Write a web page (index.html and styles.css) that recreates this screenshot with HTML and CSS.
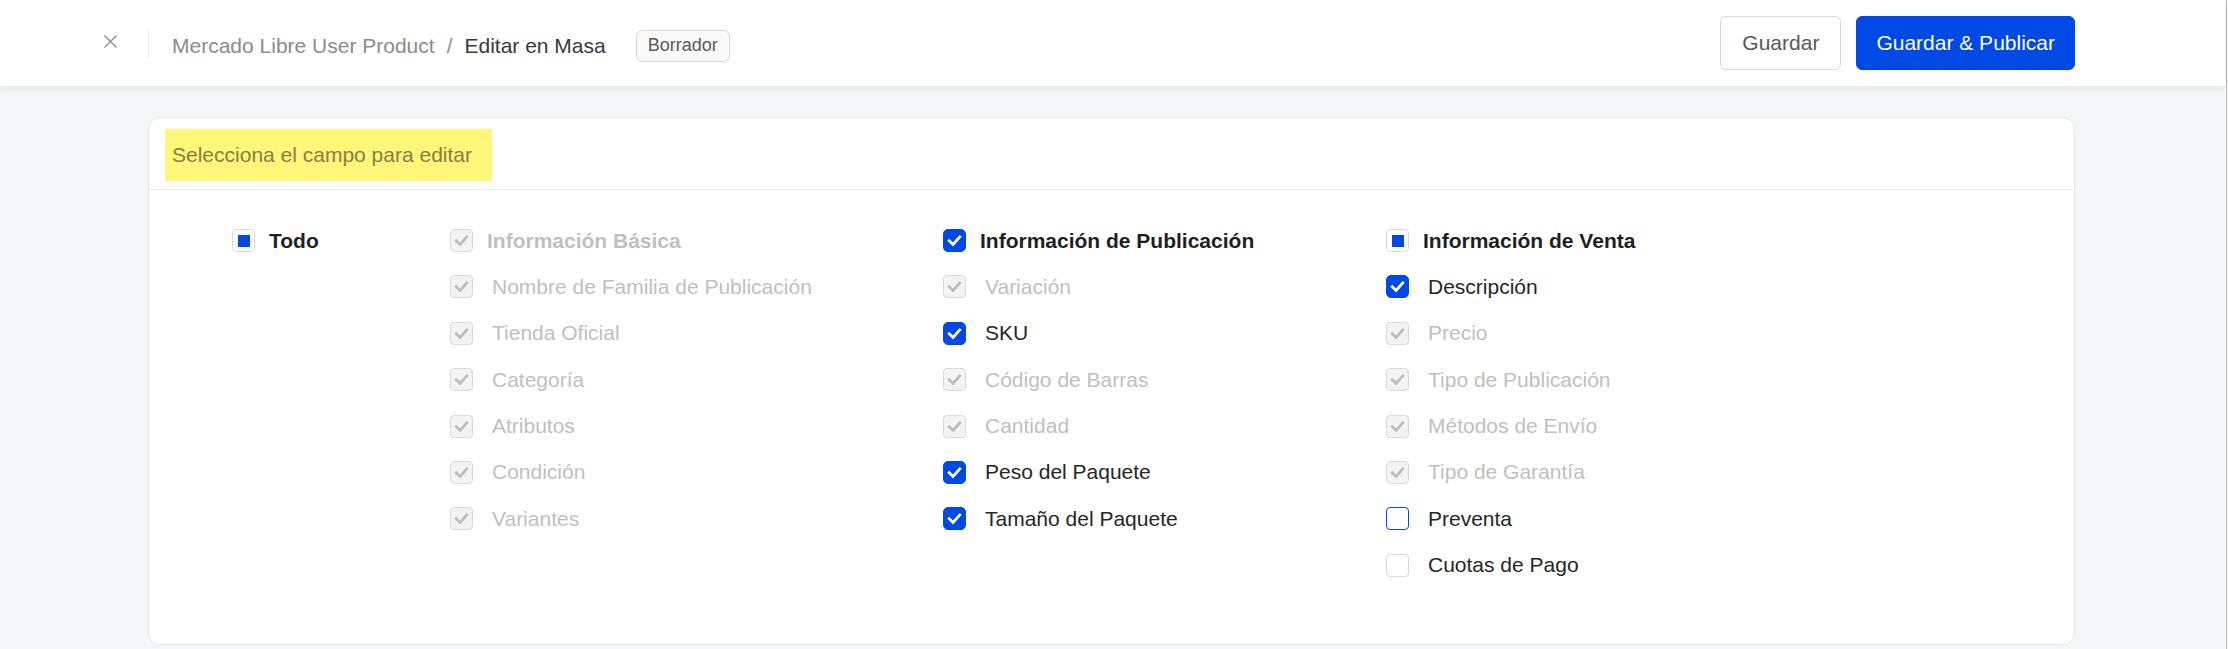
FILE: index.html
```html
<!DOCTYPE html>
<html lang="es">
<head>
<meta charset="utf-8">
<title>Editar en Masa</title>
<link rel="stylesheet" href="styles.css">
</head>
<body>
<div class="app">
  <header class="topbar">
    <div class="topbar-left">
      <button class="close-btn" aria-label="Cerrar">
        <svg width="15" height="15" viewBox="0 0 15 15"><path d="M1.5 1.5 L13.5 13.5 M13.5 1.5 L1.5 13.5" stroke="#8c8c8c" stroke-width="1.4" fill="none"/></svg>
      </button>
      <span class="vdivider"></span>
      <nav class="crumbs">
        <span class="crumb-muted">Mercado Libre User Product</span>
        <span class="crumb-sep">/</span>
        <span class="crumb-current">Editar en Masa</span>
        <span class="badge">Borrador</span>
      </nav>
    </div>
    <div class="topbar-actions">
      <button class="btn btn-default">Guardar</button>
      <button class="btn btn-primary">Guardar &amp; Publicar</button>
    </div>
  </header>

  <main class="page">
    <section class="card">
      <div class="card-head">
        <span class="highlight">Selecciona el campo para editar</span>
      </div>
      <div class="card-body">
        <div class="col">
          <label class="item head"><span class="cb indet"></span><span class="lbl">Todo</span></label>
        </div>

        <div class="col">
          <label class="item head disabled"><span class="cb dis-checked"><svg viewBox="0 0 16 16"><polyline points="4,8.2 6.9,11 12,5.2"/></svg></span><span class="lbl">Información Básica</span></label>
          <label class="item disabled"><span class="cb dis-checked"><svg viewBox="0 0 16 16"><polyline points="4,8.2 6.9,11 12,5.2"/></svg></span><span class="lbl">Nombre de Familia de Publicación</span></label>
          <label class="item disabled"><span class="cb dis-checked"><svg viewBox="0 0 16 16"><polyline points="4,8.2 6.9,11 12,5.2"/></svg></span><span class="lbl">Tienda Oficial</span></label>
          <label class="item disabled"><span class="cb dis-checked"><svg viewBox="0 0 16 16"><polyline points="4,8.2 6.9,11 12,5.2"/></svg></span><span class="lbl">Categoría</span></label>
          <label class="item disabled"><span class="cb dis-checked"><svg viewBox="0 0 16 16"><polyline points="4,8.2 6.9,11 12,5.2"/></svg></span><span class="lbl">Atributos</span></label>
          <label class="item disabled"><span class="cb dis-checked"><svg viewBox="0 0 16 16"><polyline points="4,8.2 6.9,11 12,5.2"/></svg></span><span class="lbl">Condición</span></label>
          <label class="item disabled"><span class="cb dis-checked"><svg viewBox="0 0 16 16"><polyline points="4,8.2 6.9,11 12,5.2"/></svg></span><span class="lbl">Variantes</span></label>
        </div>

        <div class="col">
          <label class="item head"><span class="cb checked"><svg viewBox="0 0 16 16"><polyline points="4,8.2 6.9,11 12,5.2"/></svg></span><span class="lbl">Información de Publicación</span></label>
          <label class="item disabled"><span class="cb dis-checked"><svg viewBox="0 0 16 16"><polyline points="4,8.2 6.9,11 12,5.2"/></svg></span><span class="lbl">Variación</span></label>
          <label class="item"><span class="cb checked"><svg viewBox="0 0 16 16"><polyline points="4,8.2 6.9,11 12,5.2"/></svg></span><span class="lbl">SKU</span></label>
          <label class="item disabled"><span class="cb dis-checked"><svg viewBox="0 0 16 16"><polyline points="4,8.2 6.9,11 12,5.2"/></svg></span><span class="lbl">Código de Barras</span></label>
          <label class="item disabled"><span class="cb dis-checked"><svg viewBox="0 0 16 16"><polyline points="4,8.2 6.9,11 12,5.2"/></svg></span><span class="lbl">Cantidad</span></label>
          <label class="item"><span class="cb checked"><svg viewBox="0 0 16 16"><polyline points="4,8.2 6.9,11 12,5.2"/></svg></span><span class="lbl">Peso del Paquete</span></label>
          <label class="item"><span class="cb checked"><svg viewBox="0 0 16 16"><polyline points="4,8.2 6.9,11 12,5.2"/></svg></span><span class="lbl">Tamaño del Paquete</span></label>
        </div>

        <div class="col">
          <label class="item head"><span class="cb indet"></span><span class="lbl">Información de Venta</span></label>
          <label class="item"><span class="cb checked"><svg viewBox="0 0 16 16"><polyline points="4,8.2 6.9,11 12,5.2"/></svg></span><span class="lbl">Descripción</span></label>
          <label class="item disabled"><span class="cb dis-checked"><svg viewBox="0 0 16 16"><polyline points="4,8.2 6.9,11 12,5.2"/></svg></span><span class="lbl">Precio</span></label>
          <label class="item disabled"><span class="cb dis-checked"><svg viewBox="0 0 16 16"><polyline points="4,8.2 6.9,11 12,5.2"/></svg></span><span class="lbl">Tipo de Publicación</span></label>
          <label class="item disabled"><span class="cb dis-checked"><svg viewBox="0 0 16 16"><polyline points="4,8.2 6.9,11 12,5.2"/></svg></span><span class="lbl">Métodos de Envío</span></label>
          <label class="item disabled"><span class="cb dis-checked"><svg viewBox="0 0 16 16"><polyline points="4,8.2 6.9,11 12,5.2"/></svg></span><span class="lbl">Tipo de Garantía</span></label>
          <label class="item"><span class="cb unchecked hover"></span><span class="lbl">Preventa</span></label>
          <label class="item"><span class="cb unchecked"></span><span class="lbl">Cuotas de Pago</span></label>
        </div>
      </div>
    </section>
  </main>
</div>
<div class="edge"></div>
</body>
</html>
```

FILE: styles.css
```css
* { box-sizing: border-box; }

html, body {
  margin: 0;
  padding: 0;
  height: 100%;
  overflow: hidden;
}

body {
  display: flex;
  background: #fff;
  font-family: "Liberation Sans", Arial, sans-serif;
  font-size: 21px;
  color: #262626;
}

.app {
  flex: 1;
  min-width: 0;
  height: 100%;
  background: #f5f6f8;
  display: flex;
  flex-direction: column;
}

.edge {
  width: 3px;
  flex: none;
  background: linear-gradient(to right, #fff 0 1px, #b8b8b8 1px 2px, #fff 2px 3px);
}

/* ---------- top bar ---------- */
.topbar {
  height: 86px;
  flex: none;
  background: #fff;
  box-shadow: 0 2px 8px rgba(0, 0, 0, 0.09);
  display: flex;
  align-items: center;
  justify-content: space-between;
  padding: 0 150px 0 103px;
  position: relative;
  z-index: 1;
}

.topbar-left {
  display: flex;
  align-items: center;
}

.close-btn {
  border: 0;
  background: transparent;
  padding: 0;
  width: 15px;
  height: 15px;
  display: flex;
  margin-top: -3px;
}

.vdivider {
  width: 1px;
  height: 30px;
  background: #ececec;
  margin-left: 30px;
}

.crumbs {
  display: flex;
  align-items: center;
  margin-left: 23px;
  padding-top: 5px;
  white-space: nowrap;
}

.crumb-muted { color: #8c8c8c; }
.crumb-sep { color: #8c8c8c; margin: 0 12px; }
.crumb-current { color: #3a3a3a; }

.badge {
  margin-left: 30px;
  height: 32px;
  padding: 0 11px;
  display: inline-flex;
  align-items: center;
  font-size: 18px;
  color: #595959;
  background: #fafafa;
  border: 1px solid #d9d9d9;
  border-radius: 6px;
}

.topbar-actions {
  display: flex;
  gap: 15px;
}

.btn {
  height: 54px;
  font-family: inherit;
  font-size: 21px;
  border-radius: 6px;
  padding: 0 21px;
  cursor: pointer;
}

.btn-default {
  background: #fff;
  color: #595959;
  border: 1px solid #d9d9d9;
}

.btn-primary {
  background: #0049e5;
  color: #fff;
  border: 1px solid #0049e5;
  padding: 0 19px;
}

/* ---------- page ---------- */
.page {
  flex: 1;
  padding: 31px 150px 0 148px;
}

.card {
  background: #fff;
  border: 1px solid #e6e6e6;
  border-radius: 12px;
}

.card-head {
  padding: 11px 0 8px 16px;
  border-bottom: 1px solid #ececec;
}

.highlight {
  display: inline-block;
  height: 52px;
  line-height: 52px;
  padding: 0 20px 0 7px;
  background: #fff67a;
  color: #85813f;
}

.card-body {
  height: 454px;
  padding: 39px 0 0 83px;
  display: grid;
  grid-template-columns: 218px 493px 443px auto;
  align-items: start;
}

.col {
  display: flex;
  flex-direction: column;
  gap: 23.4px;
}

.item {
  display: flex;
  align-items: center;
  height: 23px;
  white-space: nowrap;
  color: #262626;
}

.item .lbl { margin-left: 19px; }
.item.head .lbl { margin-left: 14px; font-weight: bold; color: #1f1f1f; }
.item.disabled .lbl,
.item.head.disabled .lbl { color: #bfbfbf; }

/* ---------- checkboxes ---------- */
.cb {
  width: 23px;
  height: 23px;
  flex: none;
  border-radius: 4px;
  border: 1px solid #d9d9d9;
  background: #fff;
  display: flex;
  align-items: center;
  justify-content: center;
}

.cb svg {
  width: 21px;
  height: 21px;
  fill: none;
  stroke-width: 2.1;
  stroke-linecap: square;
  stroke-linejoin: miter;
}

.cb.checked {
  background: #0049e5;
  border-color: #0049e5;
  border-radius: 5px;
}
.cb.checked svg { stroke: #fff; }

.cb.dis-checked {
  background: #f3f3f3;
  border-color: #d9d9d9;
}
.cb.dis-checked svg { stroke: #bdbdbd; }

.cb.indet::after {
  content: "";
  width: 12px;
  height: 12px;
  background: #0049e5;
}

.cb.unchecked.hover { border-color: #0049e5; }
```
